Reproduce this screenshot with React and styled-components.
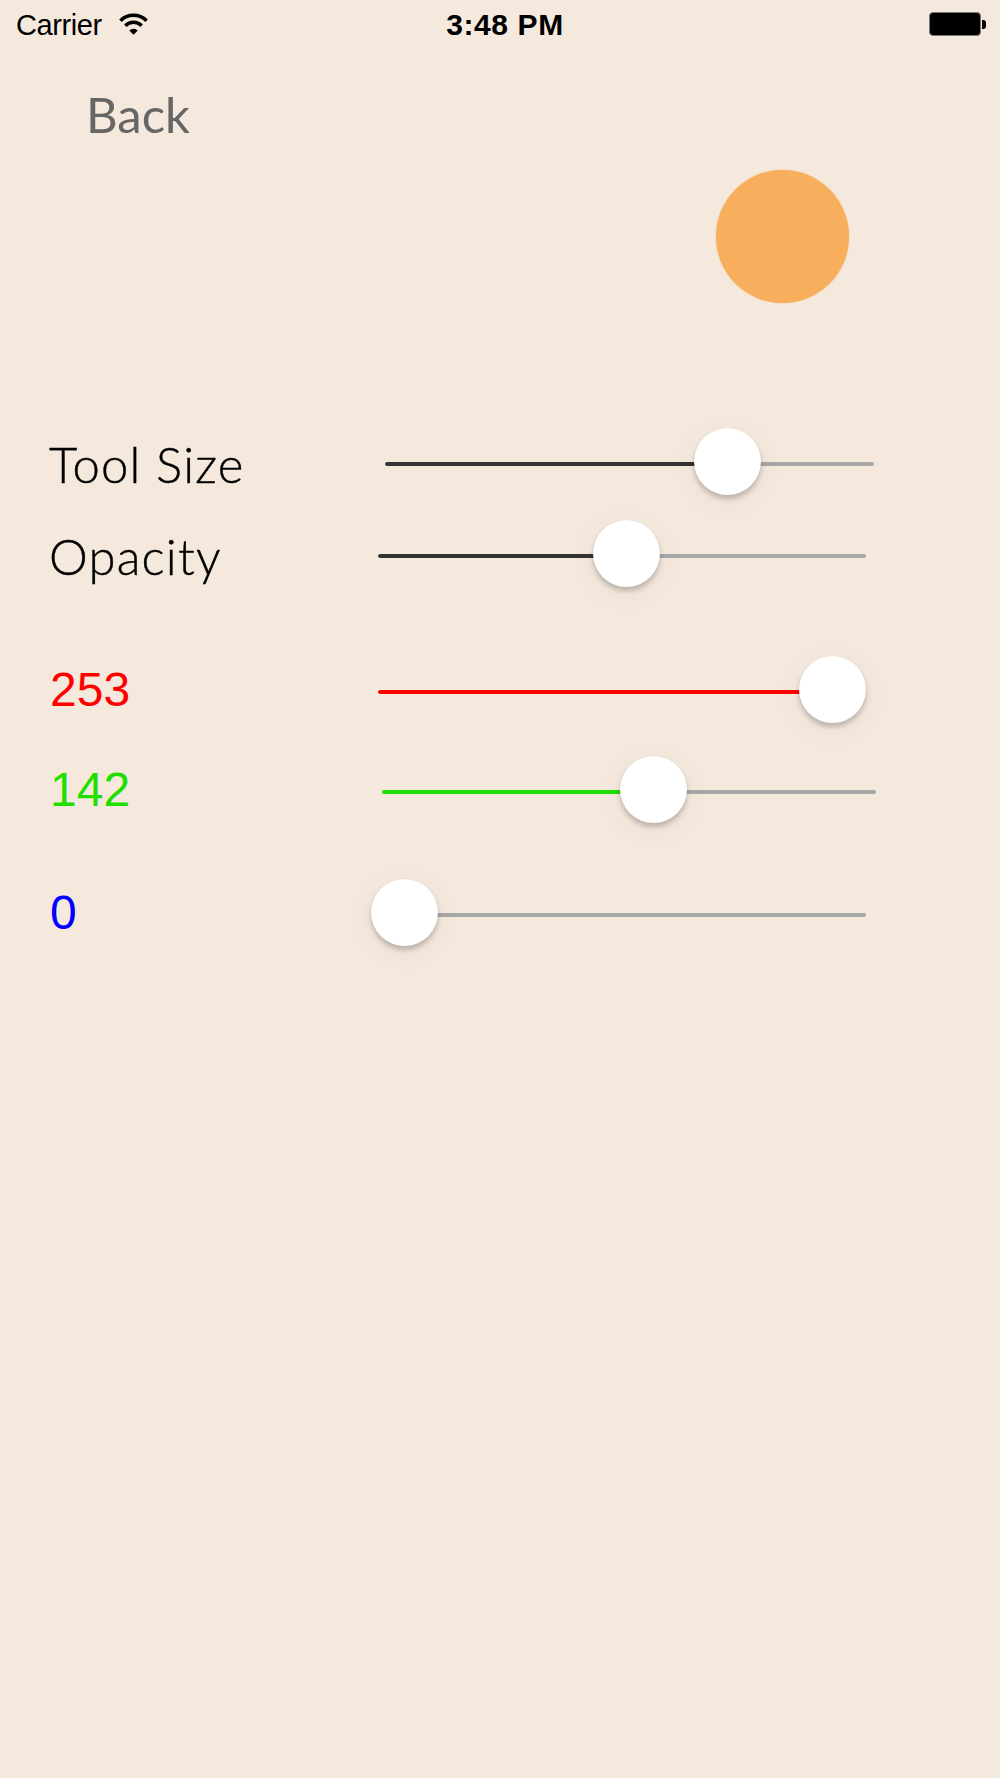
import React from "react";
import styled, { createGlobalStyle } from "styled-components";

const Global = createGlobalStyle`
  html, body { margin: 0; padding: 0; background: #F5E9DE; }
  #root { min-height: 1778px; background: #F5E9DE; }
`;

const Screen = styled.div`
  width: 1000px;
  min-height: 1778px;
  background: #F5E9DE;
  display: flex;
  flex-direction: column;
`;

const StatusBar = styled.div`
  height: 48px;
  box-sizing: border-box;
  padding: 8px 14px 0 16px;
  display: grid;
  grid-template-columns: 1fr auto 1fr;
  align-items: start;
  font-family: "Liberation Sans", Arial, sans-serif;
  color: #000;
`;

const Carrier = styled.div`
  display: flex;
  align-items: flex-start;
  gap: 16px;
  font-size: 29px;
  line-height: 34px;
  letter-spacing: -0.4px;
`;

const Wifi = styled.svg`
  margin-top: 5px;
  display: block;
`;

const Time = styled.div`
  font-size: 30px;
  line-height: 34px;
  font-weight: 700;
  letter-spacing: 0.6px;
  margin-left: 8px;
`;

const BatteryWrap = styled.div`
  justify-self: end;
  display: flex;
  align-items: center;
  margin-top: 4px;
`;

const BatteryBody = styled.div`
  width: 50px;
  height: 22px;
  background: #000;
  border: 1px solid #777;
  border-radius: 4px;
`;

const BatteryTip = styled.div`
  width: 4px;
  height: 9px;
  background: #000;
  border-radius: 0 3px 3px 0;
  margin-left: 1px;
`;

const BackButton = styled.button`
  align-self: flex-start;
  margin: 36px 0 0 86px;
  padding: 0;
  border: none;
  background: transparent;
  font-family: Lato, "Noto Sans", sans-serif;
  font-size: 49px;
  line-height: 60px;
  color: #666666;
  letter-spacing: 0px;
  cursor: pointer;
`;

const PreviewRow = styled.div`
  display: flex;
  justify-content: flex-end;
  padding-right: 151px;
  margin-top: 26px;
`;

const Preview = styled.div`
  width: 133px;
  height: 133px;
  border-radius: 50%;
  background: #F7AF5D;
  box-shadow: 0 0 1.5px rgba(247, 175, 93, 0.9);
`;

const Controls = styled.div`
  display: flex;
  flex-direction: column;
  margin-top: 125px;
  padding-left: 50px;
`;

const Row = styled.div`
  display: flex;
  align-items: center;
  height: 67px;
  margin-top: ${(p) => p.$gap || 0}px;
`;

const Label = styled.div`
  width: 328px;
  flex: none;
  font-family: ${(p) =>
    p.$num ? '"Liberation Sans", Arial, sans-serif' : 'Lato, "Noto Sans", sans-serif'};
  font-weight: ${(p) => (p.$num ? 400 : 300)};
  font-size: ${(p) => (p.$num ? 48 : 49)}px;
  letter-spacing: ${(p) => (p.$num ? 0 : 1.2)}px;
  margin-left: ${(p) => (p.$num ? 0 : -1)}px;
  margin-right: ${(p) => (p.$num ? 0 : 1)}px;
  color: ${(p) => p.$color || "#000"};
  padding-top: ${(p) => (p.$num ? 0 : 5)}px;
  -webkit-text-stroke: ${(p) => (p.$num ? "0" : "0.4px #000")};
`;

const SliderBox = styled.div`
  position: relative;
  height: 67px;
  width: ${(p) => p.$width}px;
  margin-left: ${(p) => p.$offset || 0}px;
  display: flex;
  align-items: center;
`;

const Track = styled.div`
  position: relative;
  width: 100%;
  height: 4px;
  margin-top: 4px;
  border-radius: 2px;
  background: #A8A8A8;
  overflow: hidden;
`;

const Fill = styled.div`
  height: 100%;
  background: ${(p) => p.$color};
  border-radius: 2px;
`;

const Thumb = styled.div`
  position: absolute;
  top: 0;
  width: 67px;
  height: 67px;
  margin-left: -33.5px;
  border-radius: 50%;
  background: #fff;
  box-shadow: 0 4px 5px rgba(0, 0, 0, 0.2), 0 0 1px rgba(0, 0, 0, 0.08),
    0 6px 28px rgba(90, 50, 20, 0.07);
`;

function Slider({ width, offset, pos, color }) {
  return (
    <SliderBox $width={width} $offset={offset}>
      <Track>
        <Fill $color={color} style={{ width: `${pos}px` }} />
      </Track>
      <Thumb style={{ left: `${pos}px` }} />
    </SliderBox>
  );
}

const rows = [
  { label: "Tool Size", gap: 0, width: 489, offset: 7, pos: 342, color: "#333333" },
  { label: "Opacity", gap: 25, width: 488, offset: 0, pos: 248, color: "#333333" },
  { label: "253", num: true, labelColor: "#FF0000", gap: 69, width: 488, offset: 0, pos: 454, color: "#FF0000" },
  { label: "142", num: true, labelColor: "#22DD00", gap: 33, width: 494, offset: 4, pos: 271, color: "#22DD00" },
  { label: "0", num: true, labelColor: "#0000FF", gap: 56, width: 488, offset: 0, pos: 26, color: "#0000FF" },
];

export default function App() {
  return (
    <>
      <Global />
      <Screen>
        <StatusBar>
          <Carrier>
            <span>Carrier</span>
            <Wifi width="31" height="22" viewBox="0 0 31 22">
              <path
                d="M2.42 7.72 A18.5 18.5 0 0 1 28.58 7.72"
                fill="none"
                stroke="#000"
                strokeWidth="3.6"
              />
              <path
                d="M7.37 12.67 A11.5 11.5 0 0 1 23.63 12.67"
                fill="none"
                stroke="#000"
                strokeWidth="3.6"
              />
              <path d="M15.5 21.8 L11.26 17.56 A6 6 0 0 1 19.74 17.56 Z" fill="#000" />
            </Wifi>
          </Carrier>
          <Time>3:48 PM</Time>
          <BatteryWrap>
            <BatteryBody />
            <BatteryTip />
          </BatteryWrap>
        </StatusBar>

        <BackButton>Back</BackButton>

        <PreviewRow>
          <Preview />
        </PreviewRow>

        <Controls>
          {rows.map((r) => (
            <Row key={r.label} $gap={r.gap}>
              <Label $num={r.num} $color={r.labelColor}>
                {r.label}
              </Label>
              <Slider width={r.width} offset={r.offset} pos={r.pos} color={r.color} />
            </Row>
          ))}
        </Controls>
      </Screen>
    </>
  );
}
